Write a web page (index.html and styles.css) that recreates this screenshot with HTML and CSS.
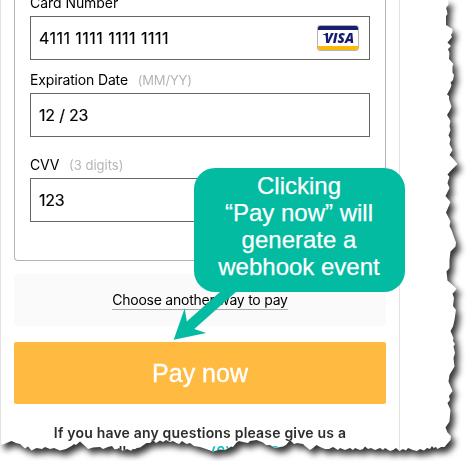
FILE: index.html
```
<!DOCTYPE html>
<html lang="en">
<head>
<meta charset="utf-8">
<title>Payment</title>
<link rel="stylesheet" href="styles.css">
</head>
<body>
<div class="shadow">
<main class="paper">
  <div class="panel">
    <section class="card-form">
      <label class="label">Card Number</label>
      <div class="field number">4111 1111 1111 1111
        <svg class="visa" width="42" height="26" viewBox="0 0 42 26">
          <rect x=".5" y=".5" width="41" height="25" rx="2.5" fill="#fff" stroke="#b5b5b5"/>
          <path d="M1 5V3Q1 1 3 1H39Q41 1 41 3V5Z" fill="#171e71"/>
          <path d="M1 21V23Q1 25 3 25H39Q41 25 41 23V21Z" fill="#fdb908"/>
          <path d="M5.8 9H10L11 12L9.5 11Q8 9.6 5.8 9.4Z" fill="#171e71"/>
          <text x="7.5" y="18" class="visa-name" textLength="29.5" lengthAdjust="spacingAndGlyphs">VISA</text>
        </svg>
      </div>
      <label class="label">Expiration Date <span class="hint">(MM/YY)</span></label>
      <div class="field">12 / 23</div>
      <label class="label cvv">CVV <span class="hint digits">(3 digits)</span></label>
      <div class="field">123</div>
    </section>
    <div class="alternative"><a class="choose">Choose another way to pay</a></div>
    <div class="pay">Pay now</div>
    <p class="help">If you have any questions please give us a<br><span class="help-next">call anytime on <span class="phone">(0) 7123 823</span></span></p>
  </div>
</main>
</div>
<div class="callout">Clicking<br>“Pay now” will<br>generate a<br>webhook event</div>
<svg class="arrow" width="70" height="52" viewBox="170 290 70 52"><path d="M173.7 339.7L184.7 308.3L186.8 321.6L221 291H237L194.3 329L206.2 333Z" fill="#02bba1"/></svg>
</body>
</html>
```

FILE: styles.css
```
* { box-sizing: border-box; }
body {
  margin: 0;
  width: 467px;
  height: 461px;
  overflow: hidden;
  position: relative;
  background: #fff;
  font-family: Inter, "Liberation Sans", sans-serif;
  color: #000;
}
.shadow { filter: drop-shadow(4px 5px 3px rgba(0,0,0,.8)); }
.paper {
  width: 467px;
  height: 461px;
  background: #fff;
  clip-path: polygon(0 0,448px 0,448.7px 4px,446px 8px,447px 11px,447.5px 14px,446px 16px,446px 25px,452.5px 29px,452.5px 32px,451px 35px,452px 37px,447.5px 42.5px,451px 46px,448px 49px,449.5px 53px,449px 59px,453.5px 64px,452.5px 66px,452.5px 72.5px,454px 75px,453px 80px,450.5px 82.5px,451.5px 85px,450.5px 88px,447px 94.5px,449px 96px,449px 99px,451.5px 106.5px,449.5px 111px,447px 115px,450.5px 121px,449.5px 126px,450.5px 130px,448.5px 135.5px,450.5px 139px,449.5px 144px,452.5px 150px,449.5px 155px,453.5px 159px,457.5px 164px,451px 170.5px,447.5px 174.5px,449.5px 177px,447.5px 183px,449.5px 188px,445.5px 196px,450.5px 202px,446px 212.5px,450.5px 221.5px,449.5px 226px,451.5px 230px,456px 242.5px,455.5px 246.5px,450.5px 251.5px,449.5px 260px,449.5px 268px,446.5px 271.5px,447.5px 280.5px,456.5px 288.5px,455px 291px,452.5px 293.5px,454px 298px,453px 306px,456px 310px,454.5px 320px,453px 326.5px,450.5px 331px,453.5px 338px,453px 341px,455px 344px,453.5px 346.5px,455px 353px,453.5px 358px,454.5px 366.5px,449.5px 375px,448.5px 381.5px,452.5px 391px,449px 396px,450px 400px,447.5px 403px,450.5px 410px,449.5px 421.5px,445.5px 427.5px,447.5px 432.5px,451px 436px,450.5px 440px,444.5px 447px,441px 447px,437.5px 449px,436px 447px,433.5px 448px,432px 446px,430px 449px,427px 448px,424px 450.5px,420px 449px,417px 451px,413px 450px,408px 448px,406px 450.5px,403px 449px,399.5px 451px,396px 448px,393px 450px,390px 451px,385px 448px,383px 450px,380px 448px,375px 450px,371px 448px,368px 449px,365px 446.5px,363px 449px,360px 450px,355px 448px,353px 450px,350px 448px,345px 450px,340px 448px,338px 450px,333px 447px,329px 449px,325px 449px,320px 447px,316.5px 445px,313px 448px,310px 450px,305px 446px,303px 444px,297px 443px,294px 444px,290px 440px,286px 445px,283px 446.5px,275px 448px,270px 445px,266px 445px,263px 442.5px,256.5px 440px,250px 441px,248px 443px,243px 442px,239px 441px,236.5px 442.5px,233px 447px,231.5px 446.5px,225px 450px,220px 449.5px,213px 451.5px,206px 449px,200px 447px,194px 446px,190px 443px,186.5px 444px,182px 441px,179px 444px,176.5px 443px,173px 441px,170px 442px,166px 440px,163px 442px,160px 440.5px,156px 443px,153px 440px,150px 443px,146.5px 443px,140px 447.5px,137px 448px,131.5px 451px,127px 449px,123px 451px,119px 448px,115px 450px,112px 446px,108px 447px,103px 449px,100px 447px,93px 447.5px,88px 449px,85px 446px,80px 441.5px,76px 445px,74px 444px,71.5px 446px,66px 449px,60px 450.5px,54px 448px,50px 449px,45px 447px,42px 449px,36.5px 448px,31.5px 450.5px,28px 446.5px,25px 448.5px,20px 444px,16px 443px,11.5px 441px,6.5px 443px,3px 444.5px,0 444px);
}
.panel {
  width: 400px;
  height: 461px;
  border: solid #e2e2e2;
  border-width: 0 1px;
  padding: 0 13px;
}
.card-form {
  height: 261px;
  border: 1px solid #b3b3b3;
  border-top: 0;
  border-radius: 0 0 4px 4px;
  padding: 0 15px;
  display: flex;
  flex-direction: column;
}
.label {
  height: 33px;
  padding-top: 10px;
  font-size: 14px;
  line-height: 20px;
  white-space: nowrap;
  letter-spacing: -.16px;
}
.label:first-child { height: 16px; padding: 0; margin-top: -7px; margin-bottom: 7px; letter-spacing: -.05px; }
.label.cvv { height: 41px; padding-top: 18px; }
.hint { color: #b5b5b5; font-size: 13px; margin-left: 6px; }
.digits { letter-spacing: .0px; }
.field {
  height: 44px;
  border: 1px solid #666;
  padding: 0 10px 0 8px;
  font-size: 16px;
  display: flex;
  align-items: center;
  justify-content: space-between;
  -webkit-text-stroke: .15px;
  letter-spacing: -.2px;
}
.number { letter-spacing: .46px; }
.visa { letter-spacing: 0; }
.visa-name { font: italic 800 13.5px "Open Sans", sans-serif; fill: #171e71; -webkit-text-stroke: 0; }
.alternative {
  margin-top: 13px;
  height: 52px;
  border-radius: 4px;
  background: #fafafa;
  display: flex;
  justify-content: center;
  align-items: center;
}
.choose {
  font-size: 14px;
  line-height: 18px;
  border-bottom: 1px solid #aaa;
  white-space: nowrap;
  letter-spacing: -.24px;
}
.pay {
  margin-top: 16px;
  height: 62px;
  border-radius: 2px;
  background: #ffba42;
  color: #fff;
  font: 25px/62px "Liberation Sans", sans-serif;
  text-align: center;
  -webkit-text-stroke: .35px #fff;
}
.help {
  margin: 19px 0 0;
  text-align: center;
  font-size: 14px;
  line-height: 19px;
  font-weight: 600;
  color: #2d2d2d;
  white-space: nowrap;
  letter-spacing: .19px;
}
.phone { color: #00bdc5; }
.callout {
  position: absolute;
  left: 193.5px;
  top: 168px;
  width: 211px;
  height: 124px;
  border-radius: 21px;
  background: #02bba1;
  color: #fff;
  font: 24px/27px "Liberation Sans", sans-serif;
  text-align: center;
  padding-top: 4px;
  -webkit-text-stroke: .25px #fff;
}
.arrow { position: absolute; left: 170px; top: 290px; }
```
